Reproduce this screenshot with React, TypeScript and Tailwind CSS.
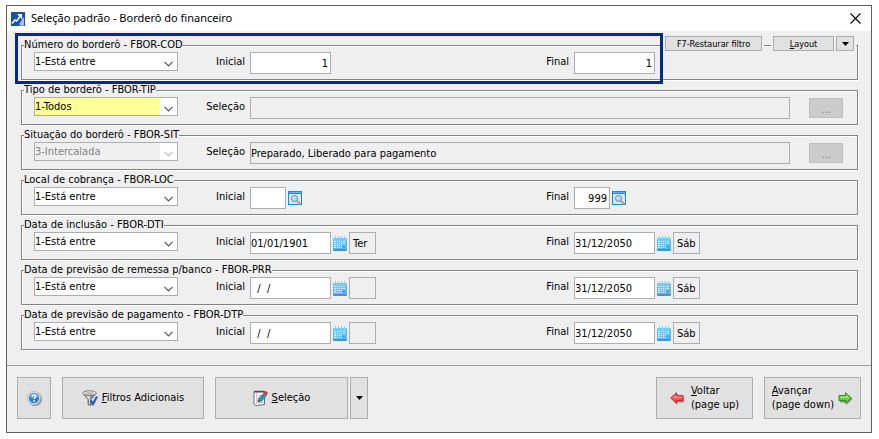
import React from "react";
import clsx from "clsx";

type Kind = "number" | "selection" | "lookup" | "date";

interface Filter {
  code: string;
  title: string;
  mode: string;
  kind: Kind;
  start?: string;
  end?: string;
  startDay?: string;
  endDay?: string;
  highlight?: boolean;
  disabled?: boolean;
}

const filters: Filter[] = [
  { code: "FBOR-COD", title: "Número do borderô", mode: "1-Está entre", kind: "number", start: "1", end: "1" },
  { code: "FBOR-TIP", title: "Tipo de borderô", mode: "1-Todos", kind: "selection", start: "", highlight: true },
  { code: "FBOR-SIT", title: "Situação do borderô", mode: "3-Intercalada", kind: "selection", start: "Preparado, Liberado para pagamento", disabled: true },
  { code: "FBOR-LOC", title: "Local de cobrança", mode: "1-Está entre", kind: "lookup", start: "", end: "999" },
  { code: "FBOR-DTI", title: "Data de inclusão", mode: "1-Está entre", kind: "date", start: "01/01/1901", end: "31/12/2050", startDay: "Ter", endDay: "Sáb" },
  { code: "FBOR-PRR", title: "Data de previsão de remessa p/banco", mode: "1-Está entre", kind: "date", start: "  /  /", end: "31/12/2050", startDay: "", endDay: "Sáb" },
  { code: "FBOR-DTP", title: "Data de previsão de pagamento", mode: "1-Está entre", kind: "date", start: "  /  /", end: "31/12/2050", startDay: "", endDay: "Sáb" },
];

const AppIcon = () => (
  <svg width="14" height="14" viewBox="0 0 14 14" aria-hidden="true">
    <rect width="14" height="14" fill="#1553a6" />
    <path d="M9 14l-1-3 2-1 1-4 2-1v9z" fill="#7f9fce" />
    <path d="M10 13V11M12 13V7M11.500 10h-2" stroke="#d3dff0" strokeWidth="1" />
    <path d="M1 11.500L4 8l1.500 1L9.500 4" fill="none" stroke="#fff" strokeWidth="1.500" />
    <path d="M6 2h5v5z" fill="#fff" />
  </svg>
);

const LookupIcon = () => (
  <svg width="14" height="14" viewBox="0 0 14 14" aria-hidden="true">
    <rect x=".5" y=".5" width="13" height="13" fill="#d9e6fa" stroke="#0a8cf5" />
    <path d="M1 1h12v1H1z" fill="#5db9ff" />
    <path d="M0 2.500h14" stroke="#0a8cf5" />
    <circle cx="6.500" cy="7.500" r="3" fill="#a9e0f5" stroke="#6c7f9e" />
    <path d="M5 7.500a1.500 1.500 0 0 1 1.500-1.500" fill="none" stroke="#fff" />
    <path d="M9 10l3.500 3.500" stroke="#f28c38" strokeWidth="2" />
  </svg>
);

const CalendarIcon = () => (
  <svg width="14" height="15" viewBox="0 0 14 15" aria-hidden="true">
    <path d="M0 2h14v11l-1 2H1l-1-1z" fill="#5fb8ee" />
    <path d="M0 2h14v3H0z" fill="#74cbf5" />
    <path d="M0 13h14v1l-1 1H1l-1-1z" fill="#4593d3" />
    <path d="M2.500 0v3M5.500 0v3M8.500 0v3M11.500 0v3" stroke="#7fd3f7" />
    <path d="M1 5h11v7H1z" fill="#d8f3fd" />
    <path d="M3.500 5v7M5.500 5v7M7.500 5v7M9.500 5v7M1 6.500h11M1 8.500h11M1 10.500h11" stroke="#62bdee" strokeWidth=".8" />
    <path d="M9 9h3v3H9z" fill="#4fa8e6" />
  </svg>
);

const HelpIcon = () => (
  <svg width="15" height="15" viewBox="0 0 15 15" aria-hidden="true">
    <circle cx="8" cy="8" r="7" fill="#8d8d8d" />
    <circle cx="7" cy="7" r="6.500" fill="#e8edf4" stroke="#b3bac4" />
    <circle cx="7" cy="7" r="5.200" fill="#2f7fd6" />
    <path d="M2.500 6a4.600 4.600 0 0 1 9 0q-4.500 2-9 0z" fill="#6fb0ee" />
    <path d="M5.300 5.500c0-2.200 3.500-2.200 3.500-.2 0 1.300-1.700 1.300-1.700 2.600" fill="none" stroke="#fff" strokeWidth="1.300" />
    <circle cx="7.100" cy="9.900" r=".9" fill="#fff" />
  </svg>
);

const FunnelIcon = () => (
  <svg width="16" height="16" viewBox="0 0 16 16" aria-hidden="true">
    <path d="M1 3.500l5 6v5l3 1v-6l5-6z" fill="#8b8b8b" stroke="#5f5f5f" strokeWidth=".8" />
    <path d="M3.500 5.500l3.500 4v4.500l1 .3V5.500z" fill="#e2e2e2" />
    <ellipse cx="7.500" cy="3.200" rx="6.800" ry="2.400" fill="#efefef" stroke="#6b6b6b" strokeWidth=".9" />
    <ellipse cx="7.500" cy="3.500" rx="4.800" ry="1.200" fill="#b5b5b5" />
    <path d="M8.500 10.500l2.500 3.500 4-7.500" fill="none" stroke="#1b62c4" strokeWidth="2.200" />
  </svg>
);

const NotepadIcon = () => (
  <svg width="15" height="16" viewBox="0 0 15 16" aria-hidden="true">
    <path d="M1 2h10.500v12.500L3 15.500 1 14z" fill="#fff" stroke="#5d6f8c" />
    <path d="M1 1.500h10.500" stroke="#43536e" strokeWidth="1.500" />
    <path d="M3.800 3v11" stroke="#e59b9b" />
    <path d="M5.500 5.500h4M5.500 8h3M5.500 12.500h5" stroke="#aac0dc" />
    <path d="M5 12l.8-4L11 3l2.500 2.300L9 11z" fill="#3c8fb8" stroke="#24647f" strokeWidth=".6" />
    <path d="M5 12l.6-2 1.500 1.300z" fill="#333" />
    <path d="M10.300 3L12 .8l2.700 1.400-.8 3.300z" fill="#dd3b2c" />
  </svg>
);

const ArrowIcon = ({ left }: { left?: boolean }) =>
  left ? (
    <svg width="15" height="13" viewBox="0 0 15 13" aria-hidden="true">
      <path d="M1.500 7L7.500 1.500v3h6.500v6H7.500v2.500z" fill="#8f8f8f" />
      <path d="M.7 6L6.500.7v2.800H13v5H6.500v2.800z" fill="#fb5252" stroke="#c32127" strokeWidth=".9" />
      <path d="M2.500 5.800l3-2.800v1.500H12v1.300z" fill="#ff9797" />
    </svg>
  ) : (
    <svg width="15" height="13" viewBox="0 0 15 13" aria-hidden="true">
      <path d="M14.500 7L8.500 1.500v3H2v6h6.500v2.500z" fill="#8f8f8f" />
      <path d="M13.300 6L7.500.7v2.800H1v5h6.500v2.800z" fill="#5bd335" stroke="#248718" strokeWidth=".9" />
      <path d="M11.500 5.800l-3-2.800v1.500H2v1.300z" fill="#a5ee86" />
    </svg>
  );

const Caret = () => (
  <svg width="7" height="4" viewBox="0 0 7 4" aria-hidden="true">
    <path d="M0 0h7L3.500 4z" fill="#000" />
  </svg>
);

const fieldClass = "h-[22px] border border-[#abadb3] leading-4 outline-none";
const buttonClass = "flex items-center justify-center border border-[#adadad] bg-[#e1e1e1]";

const ModeSelect: React.FC<{ filter: Filter }> = ({ filter }) => (
  <div className="relative h-[19px] w-36 border border-[#abadb3] bg-white">
    <select
      aria-label={filter.title}
      disabled={filter.disabled}
      defaultValue={filter.mode}
      className={clsx(
        "block h-[17px] w-full appearance-none leading-[17px] opacity-100 outline-none",
        filter.highlight && "bg-[#ffff99]",
        filter.disabled ? "bg-[#efefef] text-[#838383]" : "text-black"
      )}
    >
      <option>{filter.mode}</option>
    </select>
    <span className="pointer-events-none absolute inset-y-0 right-0 flex w-[17px] items-end justify-center bg-white pb-[3px]">
      <svg width="9" height="6" viewBox="0 0 9 6" aria-hidden="true">
        <path
          d="M.5 .8l4 4 4-4"
          fill="none"
          stroke={filter.disabled ? "#bfbfbf" : "#555"}
          strokeWidth="1.200"
        />
      </svg>
    </span>
  </div>
);

interface BoundProps {
  id: string;
  label: string;
  kind: Kind;
  value?: string;
  day?: string;
}

// One end of a range: the text box plus its picker button and weekday
const Bound: React.FC<BoundProps> = ({ id, label, kind, value, day }) => (
  <div className="flex items-center">
    <input
      id={id}
      defaultValue={value}
      className={clsx(
        fieldClass,
        "bg-white",
        kind === "lookup" ? "w-9" : "w-[81px]",
        kind !== "date" && "pr-0.5 text-right"
      )}
    />
    {kind === "lookup" && (
      <button type="button" aria-label={`Pesquisar ${label}`} className="ml-0.5">
        <LookupIcon />
      </button>
    )}
    {kind === "date" && (
      <>
        <button type="button" aria-label={`Calendário ${label}`} className="ml-0.5">
          <CalendarIcon />
        </button>
        <input
          readOnly
          aria-label={`Dia da semana ${label}`}
          value={day}
          className={clsx(fieldClass, "ml-0.5 w-[27px] bg-[#efefef] pl-[3px]")}
        />
      </>
    )}
  </div>
);

const FilterGroup: React.FC<{ filter: Filter }> = ({ filter }) => {
  const isSelection = filter.kind === "selection";
  const startId = `${filter.code}-start`;
  const endId = `${filter.code}-end`;

  return (
    <fieldset className="min-w-0 border border-[#828282] pb-[5px] pl-3 shadow-[inset_1px_1px_0_#fff,1px_1px_0_#fff]">
      <legend className="-ml-2.5 h-[13px] bg-[#efefef] leading-[11px] whitespace-nowrap">
        {filter.title} - {filter.code}
      </legend>
      <div className="grid grid-cols-[216px_324fr_283fr] items-start">
        <div className="flex justify-between pr-[5px]">
          <ModeSelect filter={filter} />
          <label htmlFor={startId} className="leading-5">
            {isSelection ? "Seleção" : "Inicial"}
          </label>
        </div>
        {isSelection ? (
          <div className="col-span-2 flex items-center pr-3.5">
            <input
              id={startId}
              readOnly
              value={filter.start}
              className={clsx(fieldClass, "min-w-0 flex-1 bg-[#efefef]")}
            />
            <button
              type="button"
              disabled
              aria-label={`Selecionar ${filter.title}`}
              className="ml-[19px] h-5 w-[34px] border border-[#bfbfbf] bg-[#ccc] pt-1 leading-[14px] text-[#838383]"
            >
              ...
            </button>
          </div>
        ) : (
          <>
            <div className="flex justify-between pr-[5px]">
              <Bound id={startId} label="inicial" kind={filter.kind} value={filter.start} day={filter.startDay} />
              <label htmlFor={endId} className="leading-5">
                Final
              </label>
            </div>
            <Bound id={endId} label="final" kind={filter.kind} value={filter.end} day={filter.endDay} />
          </>
        )}
      </div>
    </fieldset>
  );
};

const smallButton = "h-[15px] text-[9px] leading-3 shadow-[0_0_0_2px_#efefef]";

const App: React.FC = () => (
  <main className="bg-white pt-[5px] pr-[7px] pb-1.5 pl-1.5 font-['DejaVu_Sans_Condensed','Noto_Sans',sans-serif] text-[11px] text-black">
    <div className="border border-[#5f5f5f] bg-[#efefef]">
      <header className="flex h-[25px] items-center bg-white pr-2.5 pl-1">
        <AppIcon />
        <h1 className="ml-1.5 flex-1 font-['Noto_Sans','Open_Sans',sans-serif] text-[11px]">
          Seleção padrão - Borderô do financeiro
        </h1>
        <button type="button" aria-label="Fechar">
          <svg width="11" height="11" viewBox="0 0 11 11" aria-hidden="true">
            <path d="M.5 .5l10 10M10.500 .5l-10 10" stroke="#000" strokeWidth="1.100" />
          </svg>
        </button>
      </header>

      <form className="relative flex flex-col gap-1 pt-2 pr-[13px] pb-[15px] pl-3.5">
        {filters.map((filter) => (
          <FilterGroup key={filter.code} filter={filter} />
        ))}
        <div className="pointer-events-none absolute top-0.5 right-[208px] left-2 h-[51px] border-3 border-[#002b96]" />
        <div className="absolute top-[5px] right-[17px] flex">
          <button type="button" className={clsx(buttonClass, smallButton, "w-[97px]")}>
            F7-Restaurar filtro
          </button>
          <button type="button" className={clsx(buttonClass, smallButton, "ml-[11px] w-[61px]")}>
            <span>
              <u>L</u>ayout
            </span>
          </button>
          <button type="button" aria-label="Opções de layout" className={clsx(buttonClass, smallButton, "ml-0.5 w-[18px]")}>
            <Caret />
          </button>
        </div>
      </form>

      <footer className="flex border-t border-[#a0a0a0] px-2.5 pt-[11px] pb-[13px]">
        <button type="button" aria-label="Ajuda" className={clsx(buttonClass, "h-[42px] w-[34px]")}>
          <HelpIcon />
        </button>
        <button type="button" className={clsx(buttonClass, "ml-[11px] h-[42px] w-[142px] gap-1")}>
          <FunnelIcon />
          <span>
            <u>F</u>iltros Adicionais
          </span>
        </button>
        <button type="button" className={clsx(buttonClass, "ml-[11px] h-[42px] w-[133px] gap-1")}>
          <NotepadIcon />
          <span>
            <u>S</u>eleção
          </span>
        </button>
        <button type="button" aria-label="Opções de seleção" className={clsx(buttonClass, "ml-0.5 h-[42px] w-[18px]")}>
          <Caret />
        </button>
        <button type="button" className={clsx(buttonClass, "ml-auto h-[42px] w-[97px] gap-1.5 text-left leading-[14px]")}>
          <ArrowIcon left />
          <span>
            <u>V</u>oltar
            <br />
            (page up)
          </span>
        </button>
        <button type="button" className={clsx(buttonClass, "ml-[11px] h-[42px] w-[97px] gap-1 text-left leading-[14px] whitespace-nowrap")}>
          <span>
            <u>A</u>vançar
            <br />
            (page down)
          </span>
          <ArrowIcon />
        </button>
      </footer>
    </div>
  </main>
);

export default App;
